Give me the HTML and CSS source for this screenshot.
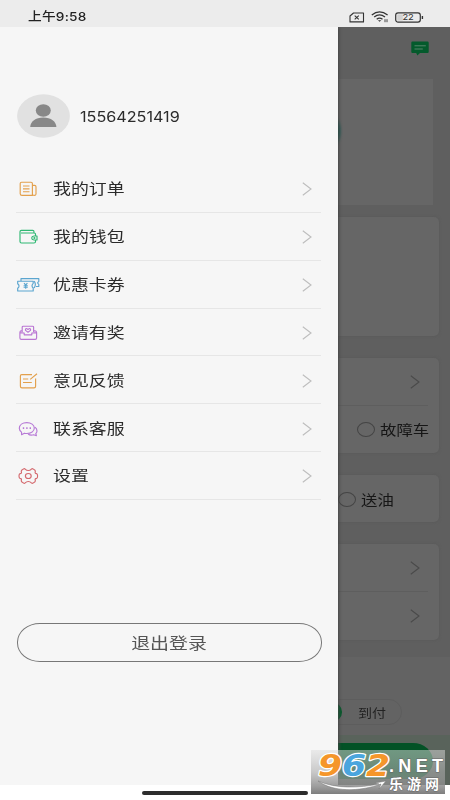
FILE: index.html
```html
<!DOCTYPE html>
<html lang="zh-CN">
<head>
<meta charset="utf-8">
<title>个人中心</title>
<link rel="stylesheet" href="styles.css">
</head>
<body>
<div class="phone">
  <header class="status">
    <span class="status-time wide">上午9:58</span>
    <div class="status-icons">
      <svg width="16" height="11" viewBox="0 0 16 11" fill="none" stroke="#333" stroke-width="1.1"><path d="M4.5 1H14.5V9.9H1V4Z" stroke-linejoin="round"/><path d="M5.7 3.6L9.8 7.4M9.8 3.6L5.7 7.4"/></svg>
      <svg width="18" height="12" viewBox="0 0 18 12" fill="none" stroke="#333" stroke-width="1.3"><path d="M.8 4Q8.5-2.4 16.6 4M3.2 6.1Q8.5 1.8 14 6.1M5.7 8.2Q8.5 5.9 11.5 8.2"/><path d="M6.9 9.2L8.6 10.8L10.3 9.2Z" fill="#333" stroke="none"/><path d="M14 8.2V11.2M16 8.2V11.2" stroke-width=".9"/></svg>
      <svg width="29" height="11" viewBox="0 0 29 11"><rect x=".7" y=".9" width="24.6" height="9.2" rx="2.4" fill="none" stroke="#333" stroke-width="1.2"/><rect x="2.3" y="2.4" width="5.5" height="6.2" fill="#d2d2d2"/><path d="M27.4 4V7" stroke="#333" stroke-width="1.4"/><text x="7.4" y="8.4" font-family="Inter, sans-serif" font-size="8" textLength="11.4" lengthAdjust="spacingAndGlyphs" fill="#333">22</text></svg>
    </div>
  </header>

  <main class="stage">
    <div class="home">
      <div class="home-top">
        <svg width="18" height="15" viewBox="0 0 18 15"><path d="M1.5 .5H16.5Q17.7 .5 17.7 1.7V11Q17.7 12 16.5 12H9L6.4 14.5L5.2 12H1.5Q.3 12 .3 11V1.7Q.3 .5 1.5 .5Z" fill="#045a2c"/><path d="M3.5 4.8H14.8M3.5 8H11.8" stroke="#56856b" stroke-width="1"/></svg>
      </div>
      <div class="banner"><i class="banner-dot"></i></div>
      <div class="card card-map"></div>
      <div class="card card-type">
        <div class="line ruled"><svg class="chev" viewBox="0 0 10 14"><path d="M.8 .8L9 7L.8 13.2"/></svg></div>
        <div class="line opt-first"><i class="radio"></i><span class="wide opt">故障车</span></div>
      </div>
      <div class="card card-fuel">
        <div class="line opt-second"><i class="radio"></i><span class="wide opt">送油</span></div>
      </div>
      <div class="card card-place">
        <div class="line ruled"><svg class="chev" viewBox="0 0 10 14"><path d="M.8 .8L9 7L.8 13.2"/></svg></div>
        <div class="line"><svg class="chev" viewBox="0 0 10 14"><path d="M.8 .8L9 7L.8 13.2"/></svg></div>
      </div>
      <div class="pay"><div class="pay-switch"><i class="pay-on"></i><span class="wide pay-text">到付</span></div></div>
      <div class="submit-bar"><div class="submit"></div></div>
    </div>

    <aside class="drawer">
      <div class="profile">
        <svg width="53" height="44" viewBox="0 0 53 44"><ellipse cx="26.5" cy="22" rx="26.4" ry="21.7" fill="#e1e1e1"/><ellipse cx="26.3" cy="16.5" rx="7.5" ry="6.2" fill="#888"/><path d="M13.2 33C13.5 27.5 18.5 23.5 26.3 23.5S39.1 27.5 39.4 33Z" fill="#888"/></svg>
        <span class="wide number">15564251419</span>
      </div>
      <nav class="menu">
        <a class="item"><svg class="ico" viewBox="0 0 24 18" stroke="#e3a04c"><path d="M5.5 2.2H15Q16.4 2.2 16.4 3.6V15.4H6Q4.2 15.4 4.2 13.8V3.6Q4.2 2.2 5.5 2.2ZM16.4 5.3H18.6Q20 5.3 20 6.7V13.9Q20 15.4 18.2 15.4T16.4 13.9M7 6H13.5M7 8.8H13.5M7 11.7H13.5"/></svg><span class="wide label">我的订单</span><svg class="chev" viewBox="0 0 10 14"><path d="M.8 .8L9 7L.8 13.2"/></svg></a>
        <a class="item"><svg class="ico" viewBox="0 0 24 18" stroke="#2fb873"><path d="M19.5 7.5V6Q19.5 5 18.3 5H5M18 5V3.7Q18 2.4 16.7 2.4H5.4Q4 2.4 4 3.7V13.5Q4 15 5.5 15H18Q19.5 15 19.5 13.8V12.4M21 8H18Q15.7 8.3 15.7 10T18 12H21Z"/><circle cx="18.4" cy="10" r=".5"/></svg><span class="wide label">我的钱包</span><svg class="chev" viewBox="0 0 10 14"><path d="M.8 .8L9 7L.8 13.2"/></svg></a>
        <a class="item"><svg class="ico" viewBox="0 0 24 18" stroke="#5ba5cf"><path d="M5 5V2.6H22.8V5.4Q20.5 6.8 22.8 8.4V10.5H20M1.7 5.2H17.2V7.3Q14.8 9.8 17.2 12V15H1.7V12.3Q4.4 10 1.7 7.7ZM18.2 5.2Q20.5 8.4 18.2 12"/><path d="M8 7.2L9.7 9L11.4 7.2M7.6 9.7H11.8M9.7 9V12.8M7.6 11.2H11.8"/></svg><span class="wide label">优惠卡券</span><svg class="chev" viewBox="0 0 10 14"><path d="M.8 .8L9 7L.8 13.2"/></svg></a>
        <a class="item"><svg class="ico" viewBox="0 0 24 18" stroke="#ba76d3"><path d="M6.2 8V3.1Q6.2 2.2 7.2 2.2H16.5Q17.6 2.2 17.6 3.1V8M6.2 6.8H5Q3.9 7.2 3.9 8.5V14Q3.9 15.4 5.2 15.4H19.2Q20.6 15.4 20.6 14V8.5Q20.6 7.2 19 6.8H17.6M4.1 8.6L8.2 9V10.8H15.8V9L20.4 8.6M12 8.2L9.5 6.4Q9.2 4.4 10.8 4.6L12 5.5L13.2 4.6Q14.9 4.4 14.5 6.4Z"/></svg><span class="wide label">邀请有奖</span><svg class="chev" viewBox="0 0 10 14"><path d="M.8 .8L9 7L.8 13.2"/></svg></a>
        <a class="item"><svg class="ico" viewBox="0 0 24 18" stroke="#e3a04c"><path d="M16 2.6H5.7Q4.4 2.6 4.4 4V14.2Q4.4 15.8 6 15.8H18Q19.6 15.8 19.6 14.2V6.5M21 1.7L14.2 7.4M7 7H12.2M7 10.5H15.8"/></svg><span class="wide label">意见反馈</span><svg class="chev" viewBox="0 0 10 14"><path d="M.8 .8L9 7L.8 13.2"/></svg></a>
        <a class="item"><svg class="ico" viewBox="0 0 24 18" stroke="#b77ad6"><path d="M5.5 12.1Q3.3 10.5 3.3 8.3C3.3 4.8 6.6 2.6 10.8 2.6S18.3 4.8 18.3 8.1S15 13.5 10.8 13.5Q9.5 13.5 8.4 13.2L5.6 14.7ZM19 7.3Q21 8.5 21 11Q21 12.5 19.8 13.5L20.4 15.7L17.7 14.8Q14.2 15.8 12.1 14"/><path d="M6.8 8.1H8.2M10.2 8.1H11.6M13.6 8.1H15" stroke-width="1.6"/></svg><span class="wide label">联系客服</span><svg class="chev" viewBox="0 0 10 14"><path d="M.8 .8L9 7L.8 13.2"/></svg></a>
        <a class="item"><svg class="ico" viewBox="0 0 24 18" stroke="#d4686d"><path d="M7.6 1.9Q8.4 1.4 9.2 2.1Q10.5 3.5 12.3 3.5T15.4 2.1Q16.2 1.4 17 1.9L19 3.3Q19.6 4 19.2 5Q18.7 6.3 20.6 6.6Q21.6 6.8 21.6 9T20.6 11.4Q18.7 11.7 19.2 13Q19.6 14 19 14.7L17 16.1Q16.2 16.6 15.4 15.9Q14.1 14.5 12.3 14.5T9.2 15.9Q8.4 16.6 7.6 16.1L5.6 14.7Q5 14 5.4 13Q5.9 11.7 4 11.4Q3 11.2 3 9T4 6.6Q5.9 6.3 5.4 5Q5 4 5.6 3.3Z"/><ellipse cx="12.3" cy="9" rx="2.9" ry="2.5"/></svg><span class="wide label">设置</span><svg class="chev" viewBox="0 0 10 14"><path d="M.8 .8L9 7L.8 13.2"/></svg></a>
      </nav>
      <button class="logout"><span class="wide">退出登录</span></button>
    </aside>
  </main>

  <footer class="nav-area"><i class="home-indicator"></i></footer>

  <svg class="watermark" width="134" height="44" viewBox="0 0 134 44">
    <defs><linearGradient id="shade" x1="0" y1="0" x2="0" y2="1"><stop offset="0" stop-color="#ddd" stop-opacity=".5"/><stop offset=".5" stop-color="#aaa" stop-opacity=".6"/><stop offset="1" stop-color="#777" stop-opacity=".95"/></linearGradient></defs>
    <rect width="134" height="44" fill="url(#shade)"/>
    <g font-family="DejaVu Sans, sans-serif" font-weight="700" font-style="italic" font-size="30" stroke="#fff" stroke-width="2.4" paint-order="stroke" stroke-linejoin="round">
      <text x="7" y="26" fill="#f5962a" textLength="24" lengthAdjust="spacingAndGlyphs">9</text>
      <text x="31" y="26" fill="#4aa5dd" textLength="24" lengthAdjust="spacingAndGlyphs">6</text>
      <text x="55" y="26" fill="#f5962a" textLength="24" lengthAdjust="spacingAndGlyphs">2</text>
    </g>
    <path d="M7 31C22 42 48 42 70 34L68 39L75 31L64 33L68 34C48 38 25 39 7 31Z" fill="#fff" stroke="#777" stroke-width=".5"/>
    <text x="78" y="21.5" font-family="Liberation Sans, sans-serif" font-weight="700" font-size="18" fill="#fff" stroke="#666" stroke-width="1" paint-order="stroke" textLength="54" lengthAdjust="spacing">.NET</text>
    <text x="78" y="39" font-family="Noto Sans CJK SC, sans-serif" font-weight="700" font-size="14" fill="#fff" stroke="#666" stroke-width="1" paint-order="stroke" textLength="50" lengthAdjust="spacing">乐游网</text>
  </svg>
</div>
</body>
</html>
```
FILE: styles.css
```css
* { box-sizing: border-box; }
body { margin: 0; font-family: Inter, "Noto Sans CJK SC", sans-serif; color: #2b2b2b; }
.phone { position: relative; width: 450px; height: 800px; overflow: hidden; display: flex; flex-direction: column; background: #fff; }
.wide { display: inline-block; transform: scaleX(1.22); transform-origin: left center; white-space: nowrap; }

.status { height: 27px; flex: none; background: #ececec; display: flex; justify-content: space-between; padding: 6px 26px 0 28px; }
.status-time { font-size: 12px; line-height: 22px; font-weight: 500; color: #222; letter-spacing: .2px; transform: scaleX(1.14); }
.status-icons { display: flex; align-items: center; gap: 6px; height: 22px; }

.stage { position: relative; height: 758px; flex: none; overflow: hidden; }
.home { height: 758px; background: #5f5f5f; display: flex; flex-direction: column; padding-left: 17px; }
.home-top { height: 52px; display: flex; justify-content: flex-end; padding: 14px 21px 0 0; }
.banner { height: 126px; margin-right: 17px; background: #666; display: flex; align-items: center; padding-left: 218px; }
.banner-dot { width: 105px; height: 72px; margin-top: -22px; border-radius: 50%; background: #03554a; filter: blur(1.5px); }
.card { margin-right: 11px; border-radius: 5px; background: #666; box-shadow: 0 0 3px #585858; }
.card-map { height: 120px; margin-top: 12px; }
.card-type { height: 95px; margin-top: 22px; }
.card-fuel { height: 47px; margin-top: 22px; }
.card-place { height: 96px; margin-top: 22px; }
.line { height: 48px; margin-right: 11px; display: flex; align-items: center; justify-content: flex-end; padding-right: 8px; }
.ruled { border-bottom: 1px solid #5e5e5e; }
.chev { width: 10px; height: 14px; fill: none; stroke: #bdbdbd; stroke-width: 1.1; }
.home .chev { stroke: #4a4a4a; }
.opt-first, .opt-second { justify-content: flex-start; gap: 5px; height: 47px; margin: 0; }
.opt-first { padding-left: 340px; }
.opt-second { padding: 2px 0 0 321px; }
.radio { width: 18px; height: 15px; border: 1px solid #444; border-radius: 50%; }
.opt { font-size: 14px; line-height: 20px; color: #161616; transform: scaleX(1.17); }
.pay { margin: 17px 0 0 -17px; height: 78px; background: #636363; display: flex; justify-content: flex-end; align-items: flex-end; padding: 0 48px 10px 0; }
.pay-switch { width: 122px; height: 26px; border: 1px solid #5d5d5d; border-radius: 13px; display: flex; align-items: center; }
.pay-on { width: 61px; height: 20px; border-radius: 10px; background: #03592a; }
.pay-text { margin-left: 16px; font-size: 12px; color: #222; transform: scaleX(1.17); }
.submit-bar { margin-left: -17px; height: 50px; background: #59635b; padding: 8px 17px 0; }
.submit { height: 36px; border-radius: 20px / 18px; background: #035226; }

.drawer { position: absolute; left: 0; top: 0; width: 338px; height: 758px; background: #f6f6f6; padding: 67px 17px 0 16px; box-shadow: 1px 0 3px #444; }
.profile { display: flex; align-items: center; gap: 10px; height: 44px; padding-left: 1px; }
.number { font-size: 14px; color: #2b2b2b; transform: scaleX(1.155); }
.menu { margin-top: 27px; }
.item { display: flex; align-items: center; height: 47.85px; border-bottom: 1px solid #e6e6e6; padding: 2px 9px 0 0; }
.ico { width: 24px; height: 18px; fill: none; stroke-width: 1.15; stroke-linejoin: round; }
.label { font-size: 14.5px; line-height: 20px; margin-left: 13px; transform: scaleX(1.235); }
.item .chev { margin-left: auto; }
.logout { display: flex; align-items: center; justify-content: center; width: 305px; height: 39px; margin: 123px 0 0 1px; padding: 0; background: transparent; border: 1px solid #777; border-radius: 23px / 19px; font: 15.5px "Noto Sans CJK SC", sans-serif; color: #555; }
.logout .wide { transform-origin: center; }

.nav-area { height: 15px; display: flex; justify-content: center; padding-top: 6px; }
.home-indicator { width: 166px; height: 3.5px; border-radius: 2px; background: #2d2d2d; }
.watermark { position: absolute; left: 311px; top: 750px; }
```
